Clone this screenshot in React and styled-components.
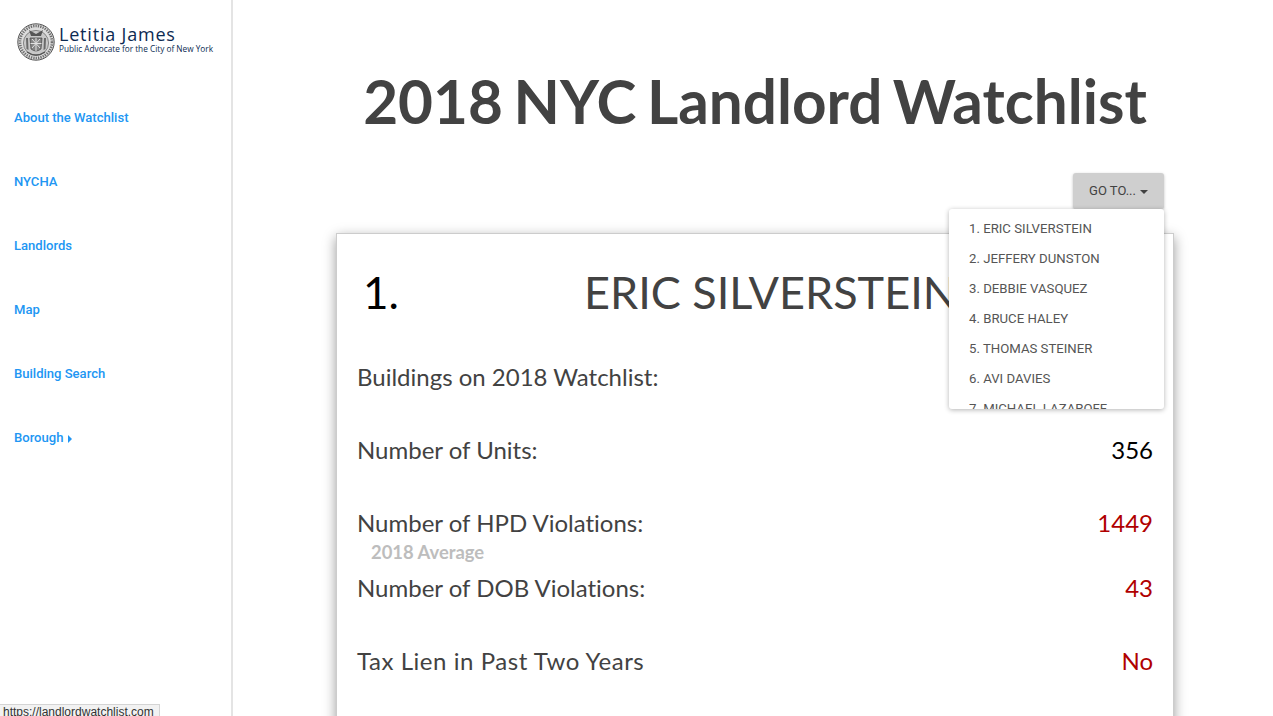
import styled, { createGlobalStyle } from "styled-components";

const GlobalStyle = createGlobalStyle`
  html, body {
    margin: 0;
    padding: 0;
    height: 716px;
    overflow: hidden;
    background: #fff;
    font-family: Lato, "Liberation Sans", sans-serif;
  }
`;

const navLinks = ["About the Watchlist", "NYCHA", "Landlords", "Map", "Building Search"];

const landlords = [
  "1. ERIC SILVERSTEIN",
  "2. JEFFERY DUNSTON",
  "3. DEBBIE VASQUEZ",
  "4. BRUCE HALEY",
  "5. THOMAS STEINER",
  "6. AVI DAVIES",
  "7. MICHAEL LAZAROFF",
];

const Seal = () => (
  <svg width="38" height="38" viewBox="0 0 38 38">
    <circle cx="19" cy="19" r="18.2" fill="#dcdcdc" stroke="#555" strokeWidth="1" />
    <circle cx="19" cy="19" r="16" fill="none" stroke="#6e6e6e" strokeWidth="2.6" strokeDasharray="1.3 1.1" />
    <circle cx="19" cy="20" r="12.6" fill="#c8c8c8" stroke="#666" strokeWidth="0.7" />
    <path d="M12 7 L19 11 L26 7 L24 13 L14 13 Z" fill="#555" />
    <path d="M13 15 H25 L24 26 Q19 30 14 26 Z" fill="#858585" stroke="#444" strokeWidth="0.7" />
    <path d="M15 16 L23 25 M23 16 L15 25 M19 15 V28 M13.5 20.5 H24.5" stroke="#e2e2e2" strokeWidth="1" />
    <path d="M9 15 L11 15 L11.5 27 L9.5 26 Z M27 15 L29 15 L28.5 26 L26.5 27 Z" fill="#6a6a6a" />
    <path d="M10 29 Q19 35 28 29" fill="none" stroke="#555" strokeWidth="1.5" />
  </svg>
);

const App = () => {
  return (
    <Page>
      <GlobalStyle />
      <Sidebar>
        <Logo>
          <Seal />
          <LogoText>
            <LogoName>Letitia James</LogoName>
            <LogoTitle>Public Advocate for the City of New York</LogoTitle>
          </LogoText>
        </Logo>
        <Nav>
          {navLinks.map((label) => (
            <NavLink key={label}>{label}</NavLink>
          ))}
          <NavLink>
            Borough<Caret />
          </NavLink>
        </Nav>
      </Sidebar>

      <Main>
        <Title>2018 NYC Landlord Watchlist</Title>
        <Toolbar>
          <GoTo>
            GO TO...<GoToCaret />
          </GoTo>
          <Menu>
            {landlords.map((name) => (
              <MenuItem key={name}>{name}</MenuItem>
            ))}
          </Menu>
        </Toolbar>

        <Card>
          <CardHead>
            <Rank>1.</Rank>
            <Name>ERIC SILVERSTEIN</Name>
          </CardHead>
          <Row>
            <Label>Buildings on 2018 Watchlist:</Label>
          </Row>
          <Row>
            <Label>Number of Units:</Label>
            <Value>356</Value>
          </Row>
          <Row $tight>
            <div>
              <Label>Number of HPD Violations:</Label>
              <Average>2018 Average</Average>
            </div>
            <Value $bad>1449</Value>
          </Row>
          <Row>
            <Label>Number of DOB Violations:</Label>
            <Value $bad>43</Value>
          </Row>
          <Row>
            <Label $wide>Tax Lien in Past Two Years</Label>
            <Value $bad>No</Value>
          </Row>
        </Card>
      </Main>

      <StatusBar>https://landlordwatchlist.com</StatusBar>
    </Page>
  );
};

const Page = styled.div`
  display: flex;
  height: 716px;
  overflow: hidden;
`;

const Sidebar = styled.aside`
  flex: none;
  width: 217px;
  border-right: 2px solid #e4e4e4;
  padding: 23px 0 0 14px;
`;

const Logo = styled.div`
  display: flex;
  align-items: center;
  gap: 4px;
  padding-left: 3px;
  height: 38px;
`;

const LogoText = styled.div`
  display: flex;
  flex-direction: column;
  padding-bottom: 7px;
  color: #0d2b52;
`;

const LogoName = styled.span`
  font-family: "Open Sans", sans-serif;
  font-size: 18px;
  font-weight: 500;
  line-height: 20px;
  letter-spacing: 0.8px;
  white-space: nowrap;
`;

const LogoTitle = styled.span`
  font-family: "Open Sans", sans-serif;
  font-size: 8.25px;
  line-height: 9px;
  white-space: nowrap;
`;

const Nav = styled.nav`
  display: flex;
  flex-direction: column;
  gap: 44px;
  margin-top: 47px;
`;

const NavLink = styled.a`
  font-family: Roboto, sans-serif;
  font-size: 13.05px;
  font-weight: 500;
  line-height: 20px;
  color: #2196f3;
`;

const Caret = styled.span`
  display: inline-block;
  margin-left: 5px;
  border-left: 4px solid #2196f3;
  border-top: 4px solid transparent;
  border-bottom: 4px solid transparent;
  vertical-align: -1px;
`;

const Main = styled.main`
  flex: 1;
  min-width: 0;
  padding: 0 99px 0 103px;
`;

const Title = styled.h1`
  margin: 0;
  padding-top: 62px;
  font-size: 60.25px;
  line-height: 78px;
  font-weight: 700;
  word-spacing: -4px;
  color: #424242;
  text-align: center;
  white-space: nowrap;
`;

const Toolbar = styled.div`
  position: relative;
  display: flex;
  justify-content: flex-end;
  margin-top: 33px;
  padding-right: 10px;
`;

const GoTo = styled.button`
  width: 91px;
  height: 36px;
  border: 0;
  border-radius: 3px;
  padding: 0 0 2px;
  background: #cfcfcf;
  box-shadow: 0 1px 3px rgba(0, 0, 0, 0.25);
  font-family: Roboto, sans-serif;
  font-size: 13px;
  font-weight: 400;
  color: #424242;
`;

const GoToCaret = styled.span`
  display: inline-block;
  margin-left: 4px;
  border-top: 4px solid #424242;
  border-left: 4px solid transparent;
  border-right: 4px solid transparent;
  vertical-align: 1px;
`;

const Menu = styled.ul`
  position: absolute;
  z-index: 2;
  top: 36px;
  right: 10px;
  width: 215px;
  height: 200px;
  margin: 0;
  padding: 5px 0 0;
  box-sizing: border-box;
  overflow: hidden;
  list-style: none;
  background: #fff;
  border-radius: 3px;
  box-shadow: 0 1px 5px rgba(0, 0, 0, 0.3);
`;

const MenuItem = styled.li`
  padding-left: 20px;
  font-family: Roboto, sans-serif;
  font-size: 13.2px;
  font-weight: 400;
  line-height: 30px;
  color: #555;
`;

const Card = styled.section`
  margin: 24px 0 0;
  height: 600px;
  box-sizing: border-box;
  padding: 26px 20px 0;
  border: 1px solid #ccc;
  box-shadow: 0 4px 12px rgba(0, 0, 0, 0.4);
`;

const CardHead = styled.div`
  display: grid;
  grid-template-columns: 222px 1fr;
  padding-left: 6px;
  height: 64px;
  margin-bottom: 37px;
  align-items: center;
`;

const Rank = styled.span`
  font-size: 44px;
  color: #000;
`;

const Name = styled.span`
  margin-left: -1px;
  font-size: 45px;
  color: #424242;
  white-space: nowrap;
`;

const Row = styled.div`
  display: flex;
  justify-content: space-between;
  align-items: flex-start;
  height: ${(props) => (props.$tight ? "65px" : "73px")};
`;

const Label = styled.div`
  font-size: 24px;
  line-height: 32px;
  letter-spacing: ${(props) => (props.$wide ? "0.55px" : "0")};
  font-variant-ligatures: none;
  color: #424242;
`;

const Value = styled.div`
  font-size: 24px;
  line-height: 32px;
  color: ${(props) => (props.$bad ? "#b00000" : "#000")};
`;

const Average = styled.div`
  padding-left: 14px;
  font-size: 18.4px;
  font-weight: 700;
  line-height: 26px;
  color: #bdbdbd;
`;

const StatusBar = styled.div`
  position: absolute;
  left: 0;
  bottom: 0;
  height: 12px;
  width: 160px;
  box-sizing: border-box;
  padding-left: 3px;
  overflow: hidden;
  background: #f2f2f2;
  border: 1px solid #d4d4d4;
  border-left: 0;
  border-bottom: 0;
  font-family: "Liberation Sans", sans-serif;
  font-size: 12px;
  line-height: 15px;
  color: #333;
`;

export default App;
